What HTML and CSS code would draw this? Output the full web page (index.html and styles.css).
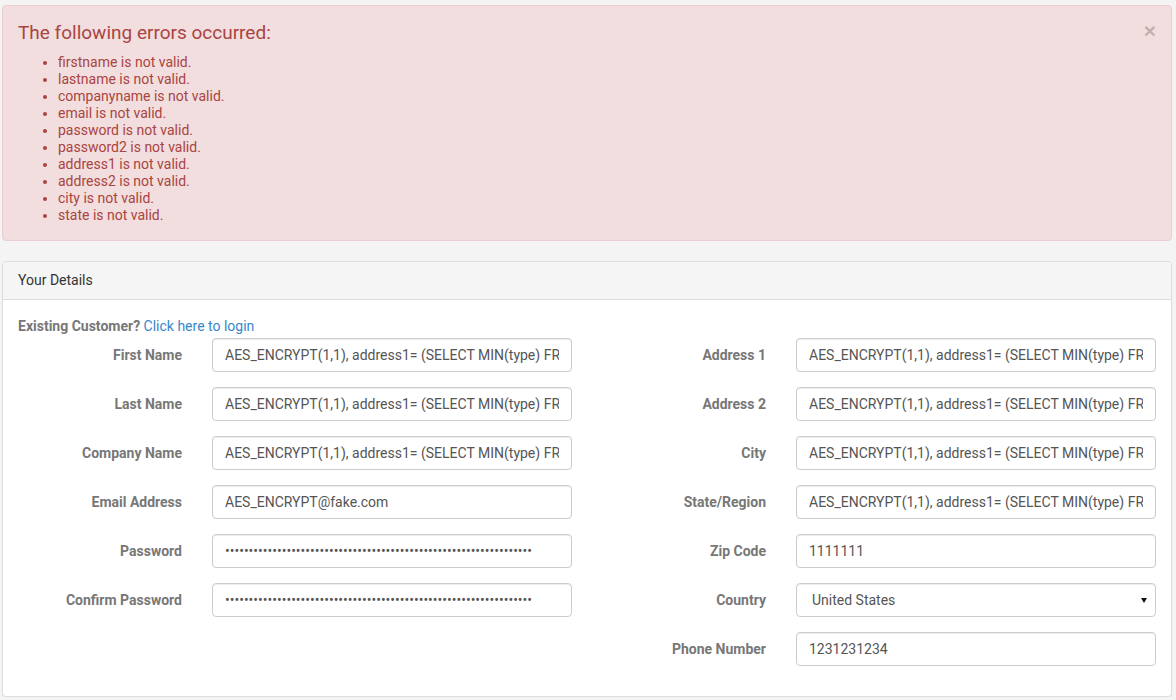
FILE: index.html
```html
<!DOCTYPE html>
<html>
<head>
<meta charset="utf-8">
<link rel="stylesheet" href="styles.css">
</head>
<body>
<div class="wrap">
  <div class="alert">
    <button class="close" type="button">&times;</button>
    <h4 class="alert-title">The following errors occurred:</h4>
    <ul class="errors">
      <li>firstname is not valid.</li>
      <li>lastname is not valid.</li>
      <li>companyname is not valid.</li>
      <li>email is not valid.</li>
      <li>password is not valid.</li>
      <li>password2 is not valid.</li>
      <li>address1 is not valid.</li>
      <li>address2 is not valid.</li>
      <li>city is not valid.</li>
      <li>state is not valid.</li>
    </ul>
  </div>

  <div class="panel">
    <div class="panel-heading">Your Details</div>
    <div class="panel-body">
      <p class="existing"><b>Existing Customer?</b> <a href="#">Click here to login</a></p>
      <div class="cols">
        <div class="col">
          <div class="row"><label>First Name</label><input class="ctl" type="text" value="AES_ENCRYPT(1,1), address1= (SELECT MIN(type) FROM information_schema"></div>
          <div class="row"><label>Last Name</label><input class="ctl" type="text" value="AES_ENCRYPT(1,1), address1= (SELECT MIN(type) FROM information_schema"></div>
          <div class="row"><label>Company Name</label><input class="ctl" type="text" value="AES_ENCRYPT(1,1), address1= (SELECT MIN(type) FROM information_schema"></div>
          <div class="row"><label>Email Address</label><input class="ctl" type="text" value="AES_ENCRYPT@fake.com"></div>
          <div class="row"><label>Password</label><input class="ctl" type="password" value="aaaaaaaaaaaaaaaaaaaaaaaaaaaaaaaaaaaaaaaaaaaaaaaaaaaaaaaaaaaaaaaaa"></div>
          <div class="row"><label>Confirm Password</label><input class="ctl" type="password" value="aaaaaaaaaaaaaaaaaaaaaaaaaaaaaaaaaaaaaaaaaaaaaaaaaaaaaaaaaaaaaaaaa"></div>
        </div>
        <div class="col">
          <div class="row"><label>Address 1</label><input class="ctl" type="text" value="AES_ENCRYPT(1,1), address1= (SELECT MIN(type) FROM information_schema"></div>
          <div class="row"><label>Address 2</label><input class="ctl" type="text" value="AES_ENCRYPT(1,1), address1= (SELECT MIN(type) FROM information_schema"></div>
          <div class="row"><label>City</label><input class="ctl" type="text" value="AES_ENCRYPT(1,1), address1= (SELECT MIN(type) FROM information_schema"></div>
          <div class="row"><label>State/Region</label><input class="ctl" type="text" value="AES_ENCRYPT(1,1), address1= (SELECT MIN(type) FROM information_schema"></div>
          <div class="row"><label>Zip Code</label><input class="ctl" type="text" value="1111111"></div>
          <div class="row"><label>Country</label>
            <div class="select-wrap">
              <select class="ctl sel"><option>United States</option></select>
              <span class="arrow"></span>
            </div>
          </div>
          <div class="row"><label>Phone Number</label><input class="ctl" type="text" value="1231231234"></div>
        </div>
      </div>
    </div>
  </div>
</div>
</body>
</html>
```

FILE: styles.css
```css
* { box-sizing: border-box; }
html, body { margin: 0; padding: 0; }
body {
  background: #f4f4f4;
  font-family: Roboto, "Liberation Sans", sans-serif;
  font-size: 14px;
  line-height: 17px;
  color: #333;
}
.wrap {
  width: 1170px;
  margin-left: 2px;
  padding-top: 5px;
}
.alert {
  position: relative;
  background: #f2dede;
  border: 1px solid #ebccd1;
  border-radius: 4px;
  color: #a94442;
  padding: 16px 15px 16px;
  margin-bottom: 20px;
}
.close {
  position: absolute;
  right: 15px;
  top: 14px;
  background: none;
  border: 0;
  padding: 0;
  font-family: "Liberation Sans", sans-serif;
  font-size: 21px;
  font-weight: bold;
  line-height: 21px;
  color: #000;
  opacity: 0.2;
}
.alert-title {
  margin: 0 0 10px;
  font-size: 19px;
  font-weight: 400;
  line-height: 22px;
}
.errors {
  margin: 0;
  padding-left: 40px;
}
.errors li { line-height: 17px; }
.panel {
  background: #fff;
  border: 1px solid #ddd;
  border-radius: 4px;
  box-shadow: 0 1px 1px rgba(0,0,0,0.05);
}
.panel-heading {
  background: #f5f5f5;
  border-bottom: 1px solid #ddd;
  border-radius: 3px 3px 0 0;
  padding: 10px 15px;
  color: #333;
  line-height: 17px;
}
.panel-body {
  padding: 15px;
}
.existing {
  margin: 1px 0 2px;
  color: #777;
  line-height: 20px;
}
.existing b { font-weight: 700; }
.existing a { color: #3a87c8; text-decoration: none; }
.cols {
  display: grid;
  grid-template-columns: 584px 584px;
  margin: 0 -15px;
}
.row {
  display: grid;
  grid-template-columns: 194px 1fr;
  align-items: center;
  margin-bottom: 15px;
}
.row label {
  text-align: right;
  padding: 0 15px;
  font-weight: 700;
  color: #777;
  line-height: 17px;
}
.ctl {
  display: block;
  height: 34px;
  width: calc(100% - 30px);
  margin-left: 15px;
  margin-right: 15px;
  padding: 6px 12px;
  border: 1px solid #ccc;
  border-radius: 4px;
  background: #fff;
  font-family: Roboto, "Liberation Sans", sans-serif;
  font-size: 14px;
  color: #555;
  box-shadow: inset 0 1px 1px rgba(0,0,0,0.075);
  outline: none;
}
.select-wrap {
  position: relative;
}
.select-wrap .sel {
  -webkit-appearance: none;
  appearance: none;
  width: calc(100% - 30px);
  padding-left: 15px;
}
.arrow {
  position: absolute;
  right: 24px;
  top: 15px;
  width: 0;
  height: 0;
  border-left: 3px solid transparent;
  border-right: 3px solid transparent;
  border-top: 5px solid #111;
}
```
